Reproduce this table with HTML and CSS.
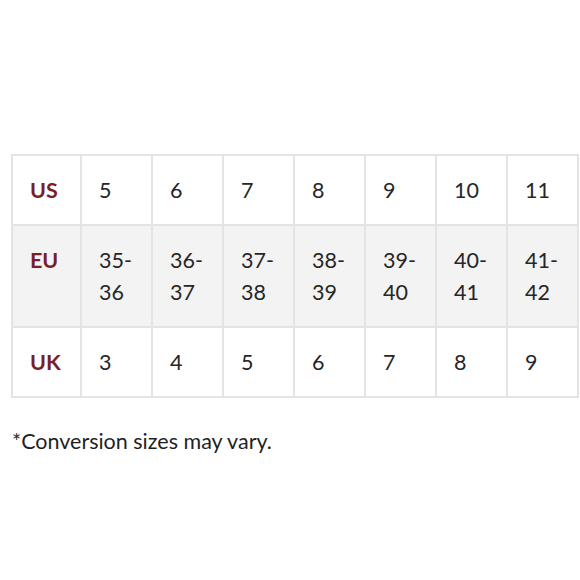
FILE: index.html
```html
<!DOCTYPE html>
<html>
<head>
<meta charset="utf-8">
<link rel="stylesheet" href="styles.css">
</head>
<body>
<main class="page">
  <table class="sizes">
    <tr class="row">
      <th class="label">US</th>
      <td>5</td><td>6</td><td>7</td><td>8</td><td>9</td><td>10</td><td>11</td>
    </tr>
    <tr class="row row-alt">
      <th class="label">EU</th>
      <td>35-<br>36</td><td>36-<br>37</td><td>37-<br>38</td><td>38-<br>39</td><td>39-<br>40</td><td>40-<br>41</td><td>41-<br>42</td>
    </tr>
    <tr class="row">
      <th class="label">UK</th>
      <td>3</td><td>4</td><td>5</td><td>6</td><td>7</td><td>8</td><td>9</td>
    </tr>
  </table>
  <p class="note">*Conversion sizes may vary.</p>
</main>
</body>
</html>
```

FILE: styles.css
```css
html, body {
  margin: 0;
  padding: 0;
  background: #ffffff;
  overflow: hidden;
}
.page {
  padding: 154px 0 0 11px;
  font-family: Lato, "Liberation Sans", sans-serif;
  color: #262626;
}
.sizes {
  border-collapse: collapse;
  table-layout: fixed;
  width: 568px;
}
.sizes th,
.sizes td {
  border: 2px solid #e4e4e4;
  padding: 18px 0 18px 17px;
  font-size: 21.5px;
  line-height: 32px;
  text-align: left;
  vertical-align: top;
  font-weight: 400;
  width: 52px;
  overflow: hidden;
  white-space: nowrap;
}
.sizes th.label {
  width: 50px;
  font-weight: 700;
  color: #7a1e28;
}
.row-alt th,
.row-alt td {
  background: #f3f3f3;
}
.note {
  margin: 27px 0 0 1px;
  font-size: 21.5px;
  line-height: 32px;
  color: #1f1f1f;
}
```
